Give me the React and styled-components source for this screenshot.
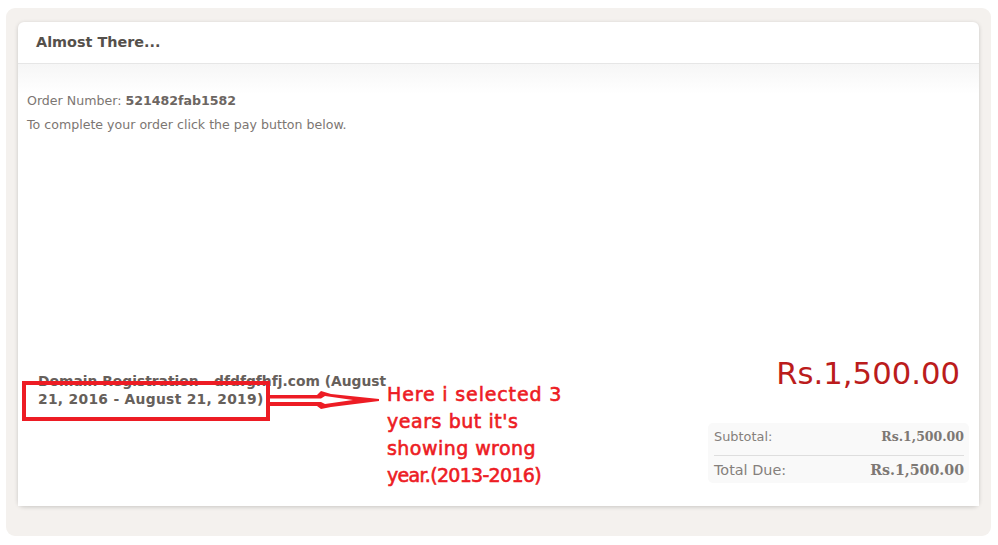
import React from 'react'
import styled, { createGlobalStyle } from 'styled-components';

const GlobalStyle = createGlobalStyle`
    html, body {
      margin: 0;
      padding: 0;
      background: #fff;
      font-family: "DejaVu Sans", Verdana, sans-serif;
    }
`;
const Page = styled.div`
    width: 998px;
    height: 545px;
    box-sizing: border-box;
    padding: 8px 7px 9px 6px;
`;
const Frame = styled.div`
    height: 100%;
    box-sizing: border-box;
    background: #f4f1ee;
    border-radius: 9px;
    padding: 14px 12px 30px 12px;
`;
const Card = styled.div`
    height: 100%;
    background: #fff;
    border-radius: 6px;
    box-shadow: 0 1px 4px rgba(0, 0, 0, 0.18);
    display: flex;
    flex-direction: column;
`;
const Header = styled.div`
    height: 42px;
    box-sizing: border-box;
    flex: none;
    padding: 12px 18px 0;
    border-bottom: 1px solid #e6e6e6;
`;
const Title = styled.h2`
    margin: 0;
    font-size: 14.4px;
    line-height: 16px;
    font-weight: 700;
    color: #55504b;
`;
const Body = styled.div`
    flex: 1;
    display: flex;
    flex-direction: column;
    justify-content: space-between;
    padding: 25px 10px 23px 9px;
    background: linear-gradient(#f6f6f6 0, #fff 30px);
`;
const Intro = styled.div`
    font-size: 12.6px;
    line-height: 24px;
    color: #7c7672;
`;
const Strong = styled.strong`
    color: #6c6662;
`;
const Bottom = styled.div`
    display: flex;
    justify-content: space-between;
    align-items: flex-start;
`;
const Item = styled.div`
    position: relative;
    width: 352px;
    margin: 16px 0 0 11px;
    font-size: 13.85px;
    line-height: 18px;
    font-weight: 700;
    color: #66605b;
`;
const Dates = styled.span`
    letter-spacing: 0.3px;
`;
const RedBox = styled.div`
    position: absolute;
    left: -16px;
    top: 9px;
    width: 248px;
    height: 40px;
    box-sizing: border-box;
    border: 4px solid #ed1c24;
`;
const Arrow = styled.svg`
    position: absolute;
    left: 231px;
    top: 18px;
`;
const Note = styled.div`
    position: absolute;
    left: 349px;
    top: 9px;
    white-space: nowrap;
    font-size: 19px;
    line-height: 27px;
    font-weight: 400;
    color: #ed1c24;
    -webkit-text-stroke: 0.6px #ed1c24;
`;
const NoteLine = styled.div`
    letter-spacing: ${p => p.$spacing}px;
`;
const Summary = styled.div`
    width: 261px;
    display: flex;
    flex-direction: column;
    align-items: flex-end;
`;
const Amount = styled.div`
    margin: 0 9px 31px 0;
    font-size: 30.7px;
    line-height: 36px;
    color: #bb1c1c;
`;
const Totals = styled.div`
    width: 100%;
    box-sizing: border-box;
    padding: 0 5px 0 6px;
    background: #f9f9f9;
    border-radius: 5px;
`;
const Row = styled.div`
    display: flex;
    justify-content: space-between;
    align-items: center;
    box-sizing: border-box;
    height: ${p => p.$height}px;
    padding-bottom: ${p => p.$shift}px;
    font-size: ${p => p.$size}px;
    color: #85807c;
    & + & {
      border-top: 1px solid #dedede;
    }
`;
const Value = styled.strong`
    color: #7d7874;
    font-family: "DejaVu Serif", serif;
    font-size: ${p => p.$size}px;
`;

export default function App() {
    return (
      <Page>
        <GlobalStyle />
        <Frame>
          <Card>
            <Header>
              <Title>Almost There...</Title>
            </Header>
            <Body>
              <Intro>
                <div>Order Number: <Strong>521482fab1582</Strong></div>
                <div>To complete your order click the pay button below.</div>
              </Intro>
              <Bottom>
                <Item>
                  Domain Registration - dfdfgfhfj.com (August <Dates>21, 2016 - August 21, 2019)</Dates>
                  <RedBox />
                  <Arrow width="112" height="20" viewBox="0 0 112 20">
                    <path d="M0 5H48L52 1L62 4L110 9V11L62 17L52 19L48 16H0Z M1 8.5H52L56 6L84 10L56 14L52 12H1Z" fill="#ed1c24" fillRule="evenodd" />
                  </Arrow>
                  <Note>
                    <NoteLine $spacing={0.85}>Here i selected 3</NoteLine>
                    <NoteLine $spacing={0.55}>years but it's</NoteLine>
                    <NoteLine $spacing={0.45}>showing wrong</NoteLine>
                    <NoteLine $spacing={-0.7}>year.(2013-2016)</NoteLine>
                  </Note>
                </Item>
                <Summary>
                  <Amount>Rs.1,500.00</Amount>
                  <Totals>
                    <Row $height={32} $size={12.9} $shift={6}>
                      <span>Subtotal:</span>
                      <Value $size={12.5}>Rs.1,500.00</Value>
                    </Row>
                    <Row $height={28} $size={14.4} $shift={0}>
                      <span>Total Due:</span>
                      <Value $size={14.2}>Rs.1,500.00</Value>
                    </Row>
                  </Totals>
                </Summary>
              </Bottom>
            </Body>
          </Card>
        </Frame>
      </Page>
    )
}
